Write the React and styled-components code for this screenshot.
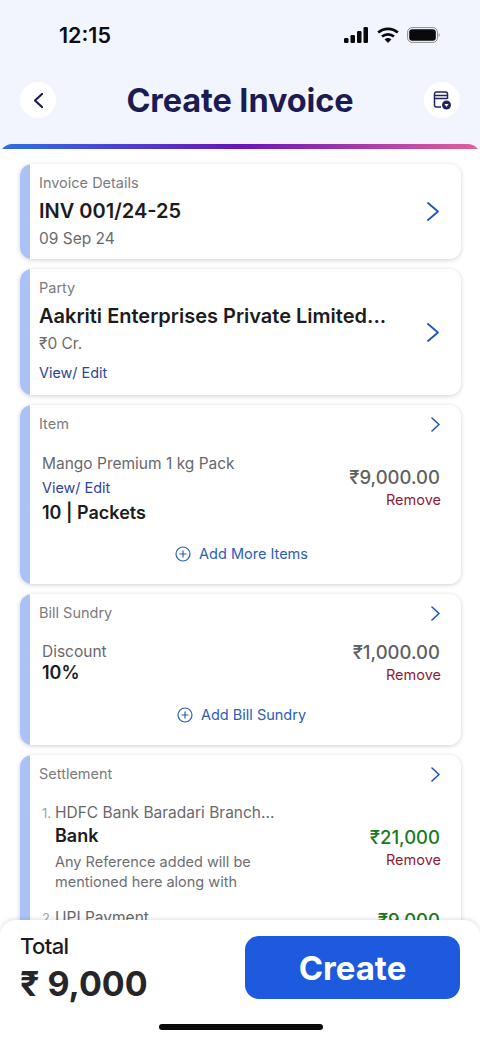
import React from "react";
import styled, { createGlobalStyle } from "styled-components";

const GlobalStyle = createGlobalStyle`
  html, body {
    margin: 0;
    padding: 0;
    background: #fff;
    font-family: Inter, "Noto Sans", sans-serif;
  }
  * {
    box-sizing: border-box;
  }
`;

const Screen = styled.div`
  position: relative;
  width: 480px;
  height: 1040px;
  overflow: hidden;
  background: #f3f5fe;
`;

const StatusBar = styled.div`
  height: 70px;
  padding: 22px 40px 0 59px;
  display: flex;
  align-items: flex-start;
  justify-content: space-between;
`;

const Clock = styled.div`
  font-size: 21.5px;
  line-height: 26px;
  font-weight: 600;
  color: #0e0e12;
`;

const StatusIcons = styled.div`
  display: flex;
  align-items: center;
  gap: 8px;
  height: 26px;
`;

const TopBar = styled.div`
  height: 74px;
  padding: 12px 20px 0;
  display: flex;
  align-items: flex-start;
  justify-content: space-between;
`;

const RoundButton = styled.div`
  width: 36px;
  height: 36px;
  border-radius: 50%;
  background: #fff;
  display: flex;
  align-items: center;
  justify-content: center;
  color: #1c1c54;
`;

const Title = styled.h1`
  margin: 1px 0 0;
  font-size: 32.5px;
  line-height: 36px;
  font-weight: 700;
  letter-spacing: -0.1px;
  color: #1c1c54;
`;

const Sheet = styled.div`
  height: 896px;
  border-radius: 12px 12px 0 0;
  padding-top: 5px;
  background: linear-gradient(90deg, #2f6fe6 0%, #6a14b8 50%, #e4609c 100%);
`;

const SheetBody = styled.div`
  height: 100%;
  background: #fff;
  padding: 15px 19px 0 20px;
  display: flex;
  flex-direction: column;
  gap: 10px;
`;

const Card = styled.section`
  flex: none;
  height: ${(p) => p.$height}px;
  border-radius: 12px;
  background: linear-gradient(90deg, #abc2f9 10px, #fff 10px);
  box-shadow: 0 1px 4px rgba(30, 40, 70, 0.22);
  padding: 10px 21px 0 19px;
  display: flex;
  flex-direction: column;
`;

const DetailCard = styled(Card)`
  flex-direction: row;
  align-items: center;
  justify-content: space-between;
  padding: 0 22px 0 19px;
  color: #1f55b5;
`;

const DetailText = styled.div`
  align-self: flex-start;
  padding-top: 10px;
  display: flex;
  flex-direction: column;
`;

const CardHead = styled.div`
  display: flex;
  align-items: center;
  justify-content: space-between;
  height: 18px;
  color: #1f55b5;
`;

const Label = styled.div`
  font-size: 14.5px;
  line-height: 18px;
  color: #7b7b7f;
`;

const Heading = styled.div`
  font-size: 20px;
  line-height: 26px;
  font-weight: 600;
  color: #1c1c20;
  margin-top: 6px;
  white-space: nowrap;
`;

const Sub = styled.div`
  font-size: 15.5px;
  line-height: 20px;
  color: #6a6a6e;
  margin-top: 5px;
`;

const EditLink = styled.div`
  font-size: 14.4px;
  line-height: 18px;
  color: #2d4596;
  margin-top: ${(p) => p.$top || 0}px;
`;

const EntryRow = styled.div`
  display: flex;
  justify-content: space-between;
  padding-left: 3px;
  margin-top: ${(p) => p.$top}px;
`;

const EntryText = styled.div`
  display: flex;
  flex-direction: column;
`;

const EntryName = styled.div`
  font-size: 15.5px;
  line-height: 20px;
  color: #68686c;
`;

const EntryBold = styled.div`
  font-size: 18px;
  line-height: 24px;
  font-weight: 600;
  color: #1c1c20;
  margin-top: ${(p) => p.$top || 0}px;
`;

const Amounts = styled.div`
  display: flex;
  flex-direction: column;
  align-items: flex-end;
  margin-top: ${(p) => p.$top || 0}px;
`;

const Amount = styled.div`
  font-size: 18.5px;
  line-height: 24px;
  font-weight: 500;
  color: ${(p) => p.$color || "#5f5f63"};
`;

const Remove = styled.div`
  font-size: 14.5px;
  line-height: 18px;
  color: #8e1c34;
  margin: 2px -1px 0 0;
`;

const AddRow = styled.div`
  display: flex;
  align-items: center;
  justify-content: center;
  gap: 8px;
  padding-left: 4px;
  margin-top: ${(p) => p.$top}px;
  font-size: 14.5px;
  line-height: 20px;
  color: #2a5db8;
`;

const ItemNumber = styled.span`
  width: 10px;
  flex: none;
  font-size: 13px;
  color: #a0a0a4;
`;

const NumberedLine = styled.div`
  display: flex;
  align-items: baseline;
  gap: 3px;
`;

const Indented = styled.div`
  padding-left: 13px;
  display: flex;
  flex-direction: column;
`;

const RefText = styled.div`
  font-size: 14.5px;
  line-height: 20px;
  color: #6e6e72;
  margin-top: 4px;
`;

const Footer = styled.div`
  position: absolute;
  left: 0;
  right: 0;
  bottom: 0;
  height: 120px;
  border-radius: 16px 16px 0 0;
  background: #fff;
  box-shadow: 0 -1px 4px rgba(30, 40, 70, 0.14);
  padding: 14px 20px 0;
  display: flex;
  justify-content: space-between;
  align-items: flex-start;
`;

const TotalBox = styled.div`
  display: flex;
  flex-direction: column;
`;

const TotalLabel = styled.div`
  font-size: 22px;
  line-height: 24px;
  font-weight: 500;
  letter-spacing: -0.6px;
  color: #1c1c20;
`;

const TotalValue = styled.div`
  font-size: 34px;
  line-height: 40px;
  font-weight: 700;
  color: #26262a;
  margin-top: 6px;
  white-space: nowrap;
`;

const CreateButton = styled.button`
  width: 215px;
  height: 63px;
  margin-top: 2px;
  border: 0;
  border-radius: 14px;
  background: #1d5ade;
  color: #fff;
  font-family: inherit;
  font-size: 33px;
  font-weight: 700;
`;

const HomeBar = styled.div`
  position: absolute;
  left: 159px;
  bottom: 10px;
  width: 164px;
  height: 6px;
  border-radius: 3px;
  background: #0a0a0c;
`;

const Chevron = ({ w, h, left, weight = 1.8 }) => {
  const points = left
    ? `${w - 1},1 1,${h / 2} ${w - 1},${h - 1}`
    : `1,1 ${w - 1},${h / 2} 1,${h - 1}`;
  return (
    <svg width={w} height={h} viewBox={`0 0 ${w} ${h}`} fill="none" stroke="currentColor" strokeWidth={weight} strokeLinecap="round" strokeLinejoin="round">
      <polyline points={points} />
    </svg>
  );
};

const Signal = () => (
  <svg width="25" height="16" viewBox="0 0 25 16" fill="#0a0a0c">
    <rect x="0" y="11" width="4.5" height="5" rx="1.2" />
    <rect x="6.5" y="8" width="4.5" height="8" rx="1.2" />
    <rect x="13" y="4" width="4.5" height="12" rx="1.2" />
    <rect x="19.5" y="0" width="4.5" height="16" rx="1.2" />
  </svg>
);

const Wifi = () => (
  <svg width="22" height="16" viewBox="0 0 22 16" fill="none" stroke="#0a0a0c" strokeWidth="2.7">
    <path d="M1.2 5.6C6.8 .6 15.2 .6 20.8 5.6" />
    <path d="M5 9.6c3.5-3 8.5-3 12 0" />
    <path d="M11 15.4l-2.9-3c1.7-1.3 4.1-1.3 5.8 0z" fill="#0a0a0c" strokeWidth="1" />
  </svg>
);

const Battery = () => (
  <svg width="33" height="16" viewBox="0 0 33 16">
    <rect x="0.6" y="0.6" width="29.8" height="14.8" rx="4.5" fill="none" stroke="#8d8d90" strokeWidth="1" />
    <rect x="2.2" y="2.2" width="26.6" height="11.6" rx="3" fill="#0a0a0c" />
    <path d="M31.5 6v4c.8-.3 1.3-1.1 1.3-2s-.5-1.7-1.3-2z" fill="#a0a0a3" />
  </svg>
);

const BillIcon = () => (
  <svg width="20" height="20" viewBox="0 0 20 20" fill="none" stroke="#24245c" strokeWidth="1.5">
    <path d="M9 17H4.5A2 2 0 0 1 2.5 15V4A2 2 0 0 1 4.5 2H13.5A2 2 0 0 1 15.5 4V9" />
    <path d="M3 5.5H15M3 8.5H15" />
    <circle cx="14.5" cy="15" r="4.5" fill="#24245c" stroke="none" />
    <path d="M12.5 14H16.5L14.5 17z" fill="#fff" stroke="none" />
  </svg>
);

const PlusCircle = () => (
  <svg width="16" height="16" viewBox="0 0 16 16" fill="none" stroke="#2a5db8" strokeWidth="1.2">
    <circle cx="8" cy="8" r="7" />
    <path d="M8 4.5V11.5M4.5 8H11.5" />
  </svg>
);

export default function App() {
  return (
    <Screen>
      <GlobalStyle />
      <StatusBar>
        <Clock>12:15</Clock>
        <StatusIcons>
          <Signal />
          <Wifi />
          <Battery />
        </StatusIcons>
      </StatusBar>
      <TopBar>
        <RoundButton>
          <Chevron w={9} h={15} left weight={2.2} />
        </RoundButton>
        <Title>Create Invoice</Title>
        <RoundButton>
          <BillIcon />
        </RoundButton>
      </TopBar>
      <Sheet>
        <SheetBody>
          <DetailCard $height={95}>
            <DetailText>
              <Label>Invoice Details</Label>
              <Heading>INV 001/24-25</Heading>
              <Sub>09 Sep 24</Sub>
            </DetailText>
            <Chevron w={12} h={19} />
          </DetailCard>
          <DetailCard $height={126}>
            <DetailText>
              <Label>Party</Label>
              <Heading>Aakriti Enterprises Private Limited...</Heading>
              <Sub>₹0 Cr.</Sub>
              <EditLink $top={10}>View/ Edit</EditLink>
            </DetailText>
            <Chevron w={12} h={19} />
          </DetailCard>
          <Card $height={179}>
            <CardHead>
              <Label>Item</Label>
              <Chevron w={9} h={15} weight={1.6} />
            </CardHead>
            <EntryRow $top={21}>
              <EntryText>
                <EntryName>Mango Premium 1 kg Pack</EntryName>
                <EditLink $top={5}>View/ Edit</EditLink>
                <EntryBold $top={4}>10 | Packets</EntryBold>
              </EntryText>
              <Amounts $top={11}>
                <Amount>₹9,000.00</Amount>
                <Remove>Remove</Remove>
              </Amounts>
            </EntryRow>
            <AddRow $top={19}>
              <PlusCircle />
              Add More Items
            </AddRow>
          </Card>
          <Card $height={151}>
            <CardHead>
              <Label>Bill Sundry</Label>
              <Chevron w={9} h={15} weight={1.6} />
            </CardHead>
            <EntryRow $top={20}>
              <EntryText>
                <EntryName>Discount</EntryName>
                <EntryBold $top={-1}>10%</EntryBold>
              </EntryText>
              <Amounts $top={-2}>
                <Amount>₹1,000.00</Amount>
                <Remove>Remove</Remove>
              </Amounts>
            </EntryRow>
            <AddRow $top={20}>
              <PlusCircle />
              Add Bill Sundry
            </AddRow>
          </Card>
          <Card $height={240}>
            <CardHead>
              <Label>Settlement</Label>
              <Chevron w={9} h={15} weight={1.6} />
            </CardHead>
            <EntryRow $top={20}>
              <EntryText>
                <NumberedLine>
                  <ItemNumber>1.</ItemNumber>
                  <EntryName>HDFC Bank Baradari Branch...</EntryName>
                </NumberedLine>
                <Indented>
                  <EntryBold $top={1}>Bank</EntryBold>
                  <RefText>
                    Any Reference added will be
                    <br />
                    mentioned here along with
                  </RefText>
                </Indented>
              </EntryText>
              <Amounts $top={22}>
                <Amount $color="#1a7a1f">₹21,000</Amount>
                <Remove>Remove</Remove>
              </Amounts>
            </EntryRow>
            <EntryRow $top={16}>
              <NumberedLine>
                <ItemNumber>2.</ItemNumber>
                <EntryName>UPI Payment</EntryName>
              </NumberedLine>
              <Amount $color="#1a7a1f">₹9,000</Amount>
            </EntryRow>
          </Card>
        </SheetBody>
      </Sheet>
      <Footer>
        <TotalBox>
          <TotalLabel>Total</TotalLabel>
          <TotalValue>₹ 9,000</TotalValue>
        </TotalBox>
        <CreateButton>Create</CreateButton>
      </Footer>
      <HomeBar />
    </Screen>
  );
}
